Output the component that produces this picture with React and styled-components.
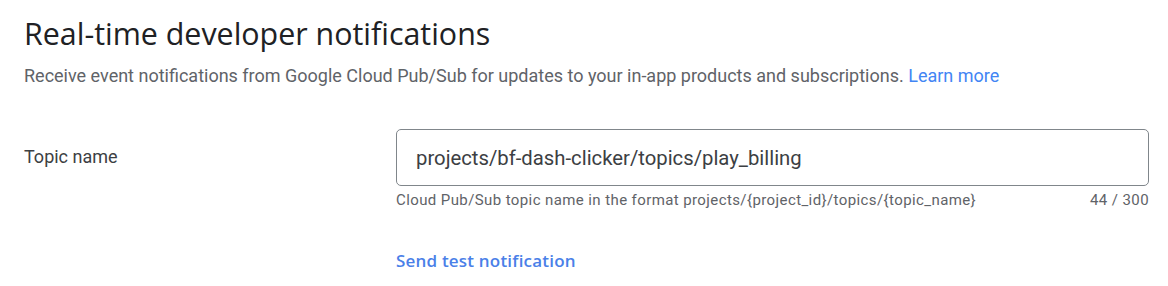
import React from "react";
import styled, { createGlobalStyle } from "styled-components";

const GlobalStyle = createGlobalStyle`
  body {
    margin: 0;
    background: #ffffff;
    font-family: Roboto, "Liberation Sans", sans-serif;
  }
`;

const Page = styled.section`
  padding: 14px 19px 0 24px;
  width: 1168px;
  box-sizing: border-box;
`;

const Title = styled.h1`
  margin: 0;
  font-family: "Open Sans", Roboto, sans-serif;
  font-weight: 500;
  font-size: 30.4px;
  line-height: 40px;
  color: #202124;
`;

const Subtitle = styled.p`
  margin: 8px 0 0 0;
  font-size: 18px;
  line-height: 28px;
  color: #5f6368;
`;

const Link = styled.a`
  color: #4285f4;
  text-decoration: none;
`;

const ActionLink = styled(Link)`
  font-family: "Open Sans", Roboto, sans-serif;
  font-weight: 600;
  font-size: 17px;
  letter-spacing: 0.2px;
  color: #4a80e8;
`;

const FieldRow = styled.div`
  display: grid;
  grid-template-columns: 372px 1fr;
  margin-top: 39px;
`;

const Label = styled.div`
  font-size: 18px;
  line-height: 24px;
  color: #3c4043;
  padding-top: 16px;
`;

const Field = styled.div`
  display: flex;
  flex-direction: column;
`;

const InputBox = styled.div`
  height: 57px;
  box-sizing: border-box;
  border: 1px solid #80868b;
  border-radius: 5px;
  padding: 0 19px;
  display: flex;
  align-items: center;
  font-size: 20.3px;
  color: #3c4043;
`;

const Helper = styled.div`
  display: flex;
  justify-content: space-between;
  font-size: 15px;
  letter-spacing: 0.4px;
  line-height: 20px;
  color: #5f6368;
  padding: 4px 0 0 0;
`;

const Actions = styled.div`
  margin-top: 39px;
  line-height: 24px;
`;

export default function App() {
  return (
    <>
      <GlobalStyle />
      <Page>
        <Title>Real-time developer notifications</Title>
        <Subtitle>
          Receive event notifications from Google Cloud Pub/Sub for updates to your in-app products and subscriptions.{" "}
          <Link href="#">Learn more</Link>
        </Subtitle>
        <FieldRow>
          <Label>Topic name</Label>
          <Field>
            <InputBox>projects/bf-dash-clicker/topics/play_billing</InputBox>
            <Helper>
              <span>Cloud Pub/Sub topic name in the format projects/{"{project_id}"}/topics/{"{topic_name}"}</span>
              <span>44 / 300</span>
            </Helper>
            <Actions>
              <ActionLink href="#">Send test notification</ActionLink>
            </Actions>
          </Field>
        </FieldRow>
      </Page>
    </>
  );
}
